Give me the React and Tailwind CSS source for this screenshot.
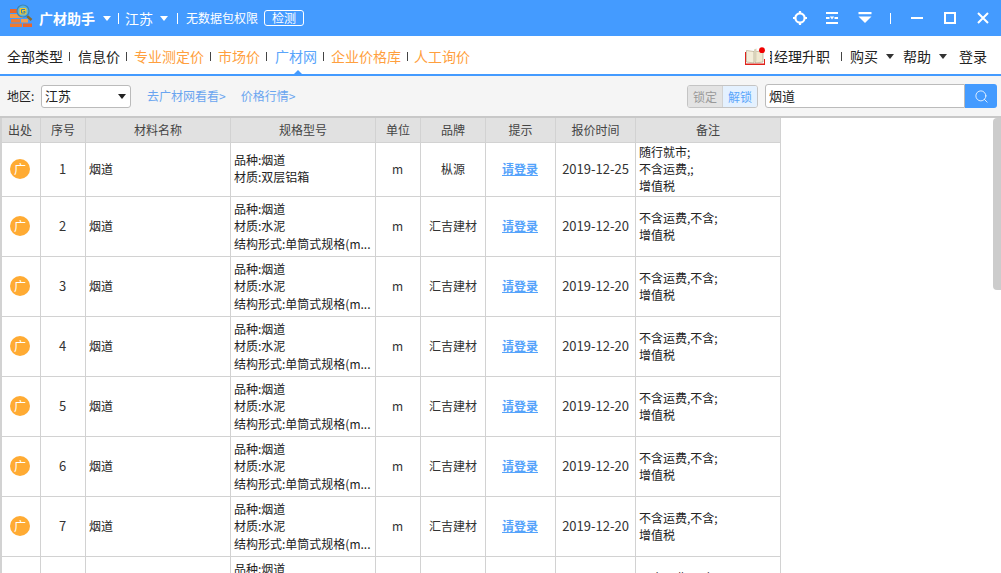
import { Search } from 'lucide-react';

const FONT = "font-['Noto_Sans_CJK_SC','Noto_Sans',sans-serif]";

const Caret = ({ className = 'border-t-white' }) => (
  <span className={`inline-block w-0 h-0 align-middle border-x-[4px] border-x-transparent border-t-[5px] ${className}`} />
);

const Sep = ({ className = 'bg-[#444]' }) => <span className={`block w-px h-[9px] ${className}`} />;

const Logo = () => (
  <svg width="24" height="24" viewBox="9 4 24 24" className="shrink-0 self-start mt-[4px]">
    <rect x="10" y="9" width="7" height="4" fill="#e8662c" />
    <rect x="10" y="14" width="13" height="4" fill="#f39a4a" />
    <rect x="11" y="19" width="9" height="3.5" fill="#ee7d35" />
    <rect x="21" y="19" width="7" height="3.5" fill="#f2a04f" />
    <rect x="10" y="23.5" width="12" height="3.5" fill="#ef7a30" />
    <rect x="23" y="23.5" width="9" height="3.5" fill="#e8662c" />
    <path d="M27 16l4.5 4" stroke="#8a6a2a" strokeWidth="2.4" />
    <circle cx="23" cy="11" r="6" fill="#5ab0dc" stroke="#3b86b8" strokeWidth="1.2" />
    <rect x="19.5" y="8" width="7" height="6.5" rx="1" fill="#f0c832" />
    <path d="M25 9.5h-3.5v3.5H25v-1.5h-1.5" fill="none" stroke="#2f7fb5" strokeWidth="1" />
  </svg>
);

const Target = () => (
  <svg width="16" height="16" viewBox="0 0 16 16" fill="none" stroke="white">
    <circle cx="8" cy="8" r="4.6" strokeWidth="2.2" />
    <path d="M8 1v2.4M8 12.6V15M1 8h2.4M12.6 8H15" strokeWidth="2.2" />
  </svg>
);

const SkinIcon = () => (
  <svg width="14" height="14" viewBox="0 0 14 14" fill="white">
    <rect x="1" y="1" width="12" height="2" />
    <rect x="1" y="11" width="12" height="2" />
    <rect x="1" y="6" width="3.5" height="2" />
    <rect x="9.5" y="6" width="3.5" height="2" />
    <path d="M4.8 5.5h4.4L7 8.5z" />
  </svg>
);

const MenuIcon = () => (
  <svg width="14" height="12" viewBox="0 0 14 12" fill="white">
    <rect x="0.5" y="0" width="13" height="2.2" />
    <path d="M0.5 4.5h13L7 11z" />
  </svg>
);

const BookIcon = () => (
  <svg width="20" height="18" viewBox="0 0 20 18" className="shrink-0">
    <path d="M0 5h1v11.5h18V12h1v6H0z" fill="#e0231b" />
    <path d="M1.5 3.5l7.5 1V16l-7.5-1z" fill="#f4eeda" stroke="#a69a7c" strokeWidth=".6" />
    <path d="M18 4l-7.5.5V16l7.5-1z" fill="#efe8d0" stroke="#a69a7c" strokeWidth=".6" />
    <path d="M9 2.5l2.5-1V14L9 16z" fill="#d9d2ba" />
    <circle cx="17" cy="3.2" r="2.9" fill="#f00000" />
  </svg>
);

const tabs = [
  { label: '全部类型', color: 'text-[#222]' },
  { label: '信息价', color: 'text-[#222]', gap: 'mr-[8px]' },
  { label: '专业测定价', color: 'text-[#ff9f3e]', gap: 'mr-[7px]' },
  { label: '市场价', color: 'text-[#ff9f3e]', gap: 'mr-[7px]' },
  { label: '广材网', color: 'text-[#5aa5fb]', gap: 'mr-[8px]' },
  { label: '企业价格库', color: 'text-[#ff9f3e]', gap: 'mr-[7px]' },
  { label: '人工询价', color: 'text-[#ff9f3e]', gap: 'mr-[6px]' },
];

const columns = [
  { label: '出处', w: 'w-[39px]', extra: 'pr-[2px]' },
  { label: '序号', w: 'w-[45px]' },
  { label: '材料名称', w: 'w-[145px]' },
  { label: '规格型号', w: 'w-[145px]' },
  { label: '单位', w: 'w-[45px]' },
  { label: '品牌', w: 'w-[65px]' },
  { label: '提示', w: 'w-[70px]' },
  { label: '报价时间', w: 'w-[80px]' },
  { label: '备注', w: 'w-[145px]' },
];

const SPEC = ['品种:烟道', '材质:水泥', '结构形式:单筒式规格(m...'];
const NOTE = ['不含运费,不含;', '增值税'];

const rows = [
  { id: 1, spec: ['品种:烟道', '材质:双层铝箱'], specPad: 'pb-[3px]', brand: '枞源', date: '2019-12-25', note: ['随行就市;', '不含运费,;', '增值税'], h: 'h-[54px]' },
  ...[2, 3, 4, 5, 6, 7, 8].map((id) => ({ id, spec: SPEC, specPad: 'pb-[1px]', brand: '汇吉建材', date: '2019-12-20', note: NOTE, h: 'h-[60px]' })),
];

const cell = 'border-r border-b border-[#d2d2d2]';

export default function App() {
  return (
    <div className={`relative w-[1001px] h-[573px] overflow-hidden bg-white text-[13px] text-[#333] ${FONT}`}>
      {/* 标题栏 */}
      <div className="h-9 bg-[#449bff] flex items-center text-white">
        <div className="ml-[9px] flex self-stretch"><Logo /></div>
        <span className="ml-[6px] text-[14px] font-bold">广材助手</span>
        <span className="ml-[8px] flex"><Caret /></span>
        <span className="ml-[7px]"><Sep className="bg-white h-[11px]" /></span>
        <span className="ml-[6px] text-[14px]">江苏</span>
        <span className="ml-[7px] flex"><Caret /></span>
        <span className="ml-[9px]"><Sep className="bg-white h-[11px]" /></span>
        <span className="ml-[8px] text-[12px]">无数据包权限</span>
        <span className="ml-[6px] w-[40px] h-[16px] leading-[14px] text-center text-[12px] border border-white rounded-[3px]">检测</span>
        <div className="ml-auto flex items-center">
          <Target />
          <span className="ml-[17px] flex"><SkinIcon /></span>
          <span className="ml-[19px] flex"><MenuIcon /></span>
          <span className="ml-[18px]"><Sep className="bg-white h-[11px]" /></span>
          <span className="ml-[20px] w-3 h-[2px] bg-white" />
          <span className="ml-[21px] w-[12px] h-[12px] border-2 border-white" />
          <svg width="14" height="14" viewBox="0 0 14 14" className="ml-[20px] mr-[11px]" stroke="white" strokeWidth="2">
            <path d="M2 2l10 10M12 2L2 12" />
          </svg>
        </div>
      </div>

      {/* 导航 */}
      <div className="relative h-10 border-b-2 border-[#449bff] flex items-center pl-[7px] pt-[2px] text-[14px]">
        {tabs.map((t, i) => (
          <div key={t.label} className="flex items-center">
            {i > 0 && <Sep className={`bg-[#444] ml-[6px] ${t.gap}`} />}
            <span className={t.color}>{t.label}</span>
          </div>
        ))}
        <span className="absolute left-[293px] -bottom-[1px] w-0 h-0 border-x-[5px] border-x-transparent border-b-[5px] border-b-[#449bff]" />
        <div className="ml-auto flex items-center pr-[14px] text-[#222]">
          <BookIcon />
          <span className="ml-[5px] w-[61px] pr-[1px] overflow-hidden whitespace-nowrap flex justify-end">项目经理升职</span>
          <span className="ml-[10px]"><Sep /></span>
          <span className="ml-[8px]">购买</span>
          <span className="ml-[8px] flex"><Caret className="border-t-[#333]" /></span>
          <span className="ml-[9px]">帮助</span>
          <span className="ml-[8px] flex"><Caret className="border-t-[#333]" /></span>
          <span className="ml-[12px]">登录</span>
        </div>
      </div>

      {/* 工具栏 */}
      <div className="h-[42px] bg-[#f5f5f5] border-b-2 border-[#c8c8c8] flex items-center pl-[7px] pr-[4px] text-[12px]">
        <span className="w-[34px] text-[#222]">地区:</span>
        <div className="w-[90px] h-[23px] bg-white border border-[#bbb] rounded-[3px] flex items-center justify-between pl-[3px] pr-[4px] text-[13px] text-[#222]">
          <span>江苏</span>
          <Caret className="border-t-[#222]" />
        </div>
        <span className="ml-[16px] text-[#6aa5f0]">去广材网看看&gt;</span>
        <span className="ml-[15px] text-[#6aa5f0]">价格行情&gt;</span>
        <div className="ml-auto flex h-[23px] border border-[#c4c4c4] rounded-[3px] overflow-hidden">
          <span className="w-[35px] bg-[#e3e3e3] text-[#999] text-center leading-[21px] border-r border-[#d2d2d2]">锁定</span>
          <span className="w-[34px] bg-[#e4f1ff] text-[#5aa5fb] text-center leading-[21px]">解锁</span>
        </div>
        <div className="ml-[7px] flex h-[24px]">
          <div className="w-[200px] bg-white border border-[#bbb] rounded-l-[3px] pl-[3px] leading-[22px] text-[13px] text-[#222]">烟道</div>
          <div className="w-[32px] bg-[#449bff] rounded-r-[3px] flex items-center justify-center">
            <Search size={15} strokeWidth={1.3} className="text-white" />
          </div>
        </div>
      </div>

      {/* 表格 */}
      <div className="w-[781px] border-l-2 border-[#d2d2d2]">
        <div className="flex h-[25px] bg-[#e1e1e1]">
          {columns.map((c) => (
            <div key={c.label} className={`${c.w} ${c.extra || ''} ${cell} border-[#cfcfcf] shrink-0 flex items-center justify-center text-[12px] text-[#444]`}>
              {c.label}
            </div>
          ))}
        </div>
        {rows.map((r) => (
          <div key={r.id} className={`flex ${r.h}`}>
            <div className={`${columns[0].w} ${cell} pr-[2px] flex items-center justify-center`}>
              <span className="w-5 h-5 -mt-[1px] rounded-full bg-[#ffab33] text-white text-[12px] leading-5 text-center">广</span>
            </div>
            <div className={`${columns[1].w} ${cell} pr-[1px] pb-[2px] flex items-center justify-center text-[13px]`}>{r.id}</div>
            <div className={`${columns[2].w} ${cell} pb-[2px] flex items-center pl-[3px] text-[12px] text-[#222]`}>烟道</div>
            <div className={`${columns[3].w} ${cell} ${r.specPad} flex flex-col justify-center pl-[3px] text-[12px] leading-[17.5px] text-[#222]`}>
              {r.spec.map((s) => <div key={s} className="whitespace-nowrap">{s}</div>)}
            </div>
            <div className={`${columns[4].w} ${cell} pr-[1px] pb-[2px] flex items-center justify-center text-[12px]`}>m</div>
            <div className={`${columns[5].w} ${cell} pb-[2px] flex items-center justify-center text-[12px]`}>{r.brand}</div>
            <div className={`${columns[6].w} ${cell} pr-[1px] pb-[2px] flex items-center justify-center text-[12px] font-bold underline text-[#55a3fb]`}>请登录</div>
            <div className={`${columns[7].w} ${cell} pb-[2px] flex items-center justify-center text-[13px] whitespace-nowrap`}>{r.date}</div>
            <div className={`${columns[8].w} ${cell} pb-[2px] flex flex-col justify-center pl-[3px] text-[12px] leading-[17px] text-[#222]`}>
              {r.note.map((n) => <div key={n}>{n}</div>)}
            </div>
          </div>
        ))}
      </div>

      {/* 滚动条 */}
      <div className="absolute right-0 top-[118px] w-2 h-[172px] bg-[#cccccc] rounded-l-[4px]" />
    </div>
  );
}
